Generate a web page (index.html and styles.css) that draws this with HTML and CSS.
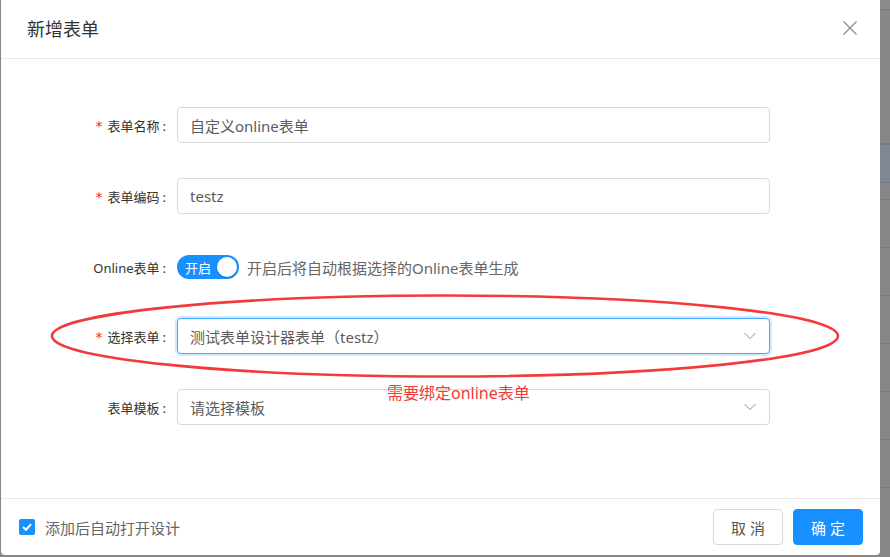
FILE: index.html
```html
<!DOCTYPE html>
<html lang="zh-CN">
<head>
  <meta charset="UTF-8" />
  <title>新增表单</title>
  <link rel="stylesheet" href="styles.css">
</head>
<body>
  <div class="page">
    <div class="modal">
      <div class="modal-header">
        <span class="modal-title">新增表单</span>
        <span class="modal-close">
          <svg width="14" height="14" viewBox="0 0 14 14"><path d="M0.5 0.5 L13.5 13.5 M13.5 0.5 L0.5 13.5" stroke="#8c8c8c" stroke-width="1.3" fill="none"/></svg>
        </span>
      </div>

      <div class="modal-body">
        <div class="form-row">
          <label class="form-label"><span class="req">*</span>表单名称</label>
          <div class="form-control">
            <div class="input">自定义online表单</div>
          </div>
        </div>

        <div class="form-row">
          <label class="form-label"><span class="req">*</span>表单编码</label>
          <div class="form-control">
            <div class="input">testz</div>
          </div>
        </div>

        <div class="form-row switch-row">
          <label class="form-label">Online表单</label>
          <div class="form-control">
            <span class="switch"><span class="switch-text">开启</span><span class="switch-knob"></span></span>
            <span class="help">开启后将自动根据选择的Online表单生成</span>
          </div>
        </div>

        <div class="form-row">
          <label class="form-label"><span class="req">*</span>选择表单</label>
          <div class="form-control">
            <div class="input select focused">
              <span>测试表单设计器表单（testz）</span>
              <svg class="arrow" width="12" height="8" viewBox="0 0 12 8"><path d="M0.5 1 L6 6.5 L11.5 1" stroke="#bfbfbf" stroke-width="1.2" fill="none"/></svg>
            </div>
          </div>
        </div>

        <div class="form-row">
          <label class="form-label">表单模板</label>
          <div class="form-control">
            <div class="input select">
              <span>请选择模板</span>
              <svg class="arrow" width="12" height="8" viewBox="0 0 12 8"><path d="M0.5 1 L6 6.5 L11.5 1" stroke="#bfbfbf" stroke-width="1.2" fill="none"/></svg>
            </div>
          </div>
        </div>
      </div>

      <div class="modal-footer">
        <label class="check">
          <span class="check-box">
            <svg width="10" height="8" viewBox="0 0 10 8"><path d="M1 4 L4 6.8 L9 1.2" stroke="#fff" stroke-width="2" fill="none"/></svg>
          </span>
          添加后自动打开设计
        </label>
        <div class="actions">
          <button class="btn">取 消</button>
          <button class="btn btn-primary">确 定</button>
        </div>
      </div>

      <!-- hand-drawn annotation over the screenshot -->
      <svg class="mark" width="796" height="90" viewBox="0 0 796 90">
        <ellipse cx="396" cy="43" rx="393" ry="40.5" fill="none" stroke="#f23a3a" stroke-width="2.6"/>
      </svg>
      <span class="note">需要绑定online表单</span>
    </div>

    <div class="behind">
      <div class="behind-row head"></div>
      <div class="behind-row" style="height: 134px"></div>
      <div class="behind-row picked" style="height: 39px"></div>
      <div class="behind-row" style="height: 17px"></div>
      <div class="behind-row"></div>
      <div class="behind-row"></div>
      <div class="behind-row"></div>
      <div class="behind-row"></div>
      <div class="behind-row"></div>
      <div class="behind-row"></div>
    </div>
  </div>
</body>
</html>
```

FILE: styles.css
```css
* {
  box-sizing: border-box;
}

body {
  margin: 0;
  background: #878787;
  font-family: "Noto Sans", "Noto Sans CJK SC", sans-serif;
  color: #333;
}

.page {
  display: flex;
  height: 557px;
  overflow: hidden;
}

.modal {
  position: relative;
  width: 879px;
  height: 555px;
  margin-left: 1px;
  background: #fff;
  border-radius: 0 0 4px 4px;
  display: flex;
  flex-direction: column;
}

.modal-header {
  height: 59px;
  padding: 0 23px 0 26px;
  border-bottom: 1px solid #e8e8e8;
  display: flex;
  align-items: center;
  justify-content: space-between;
}

.modal-title {
  font-size: 18px;
  line-height: 24px;
  color: #333;
}

.modal-close {
  display: flex;
  margin-top: -2px;
}

.modal-body {
  flex: 1;
  padding-top: 48px;
}

.form-row {
  display: flex;
  align-items: center;
  height: 36px;
  margin-bottom: 35px;
}

.switch-row {
  margin-bottom: 33px;
}

.form-label {
  flex: 0 0 168px;
  text-align: right;
  font-size: 13px;
  color: #333;
}

.form-label::after {
  content: ":";
  margin: 0 3px 0 3px;
}

.req {
  color: #f5222d;
  margin-right: 5px;
  font-family: "DejaVu Sans", sans-serif;
  font-size: 14px;
}

.form-control {
  flex: 0 0 593px;
  margin-left: 8px;
  display: flex;
  align-items: center;
}

.input {
  width: 100%;
  height: 36px;
  border: 1px solid #d9d9d9;
  border-radius: 4px;
  padding: 0 12px;
  display: flex;
  align-items: center;
  font-size: 15px;
  color: #5c5c5c;
}

.select {
  justify-content: space-between;
  padding-right: 13px;
}

.focused {
  border-color: #40a9ff;
  box-shadow: 0 0 0 2px rgba(24, 144, 255, 0.2);
}

.switch {
  width: 62px;
  height: 24px;
  border-radius: 12px;
  background: #1890ff;
  display: flex;
  align-items: center;
  justify-content: space-between;
  padding: 0 2px 0 8px;
}

.switch-text {
  color: #fff;
  font-size: 13px;
}

.switch-knob {
  width: 20px;
  height: 20px;
  border-radius: 50%;
  background: #fff;
  box-shadow: 0 1px 2px rgba(0, 35, 11, 0.2);
}

.help {
  margin-left: 8px;
  font-size: 15px;
  color: #666;
}

.modal-footer {
  height: 57px;
  border-top: 1px solid #e8e8e8;
  display: flex;
  align-items: center;
  justify-content: space-between;
  padding: 0 17px 0 18px;
}

.check {
  display: flex;
  align-items: center;
  font-size: 15px;
  color: #666;
}

.check-box {
  width: 16px;
  height: 16px;
  border-radius: 2px;
  background: #1890ff;
  display: flex;
  align-items: center;
  justify-content: center;
  margin-right: 10px;
}

.actions {
  display: flex;
  gap: 10px;
}

.btn {
  width: 70px;
  height: 36px;
  border: 1px solid #d9d9d9;
  border-radius: 4px;
  background: #fff;
  font-family: inherit;
  font-size: 15px;
  color: #555;
}

.btn-primary {
  background: #1890ff;
  border-color: #1890ff;
  color: #fff;
}

.mark {
  position: absolute;
  left: 48px;
  top: 293px;
}

.note {
  position: absolute;
  left: 386px;
  top: 380px;
  font-size: 16px;
  color: #f23a3a;
}

.behind {
  flex: 1;
  display: flex;
  flex-direction: column;
}

.behind-row {
  height: 48px;
  border-bottom: 1px solid #7b7b7b;
  flex-shrink: 0;
}

.behind-row.head {
  height: 10px;
  background: #8b8b8b;
}

.behind-row.picked {
  background: #7f8891;
  border-top: 1px solid #6b7f92;
  border-bottom-color: #6b7f92;
}
```
